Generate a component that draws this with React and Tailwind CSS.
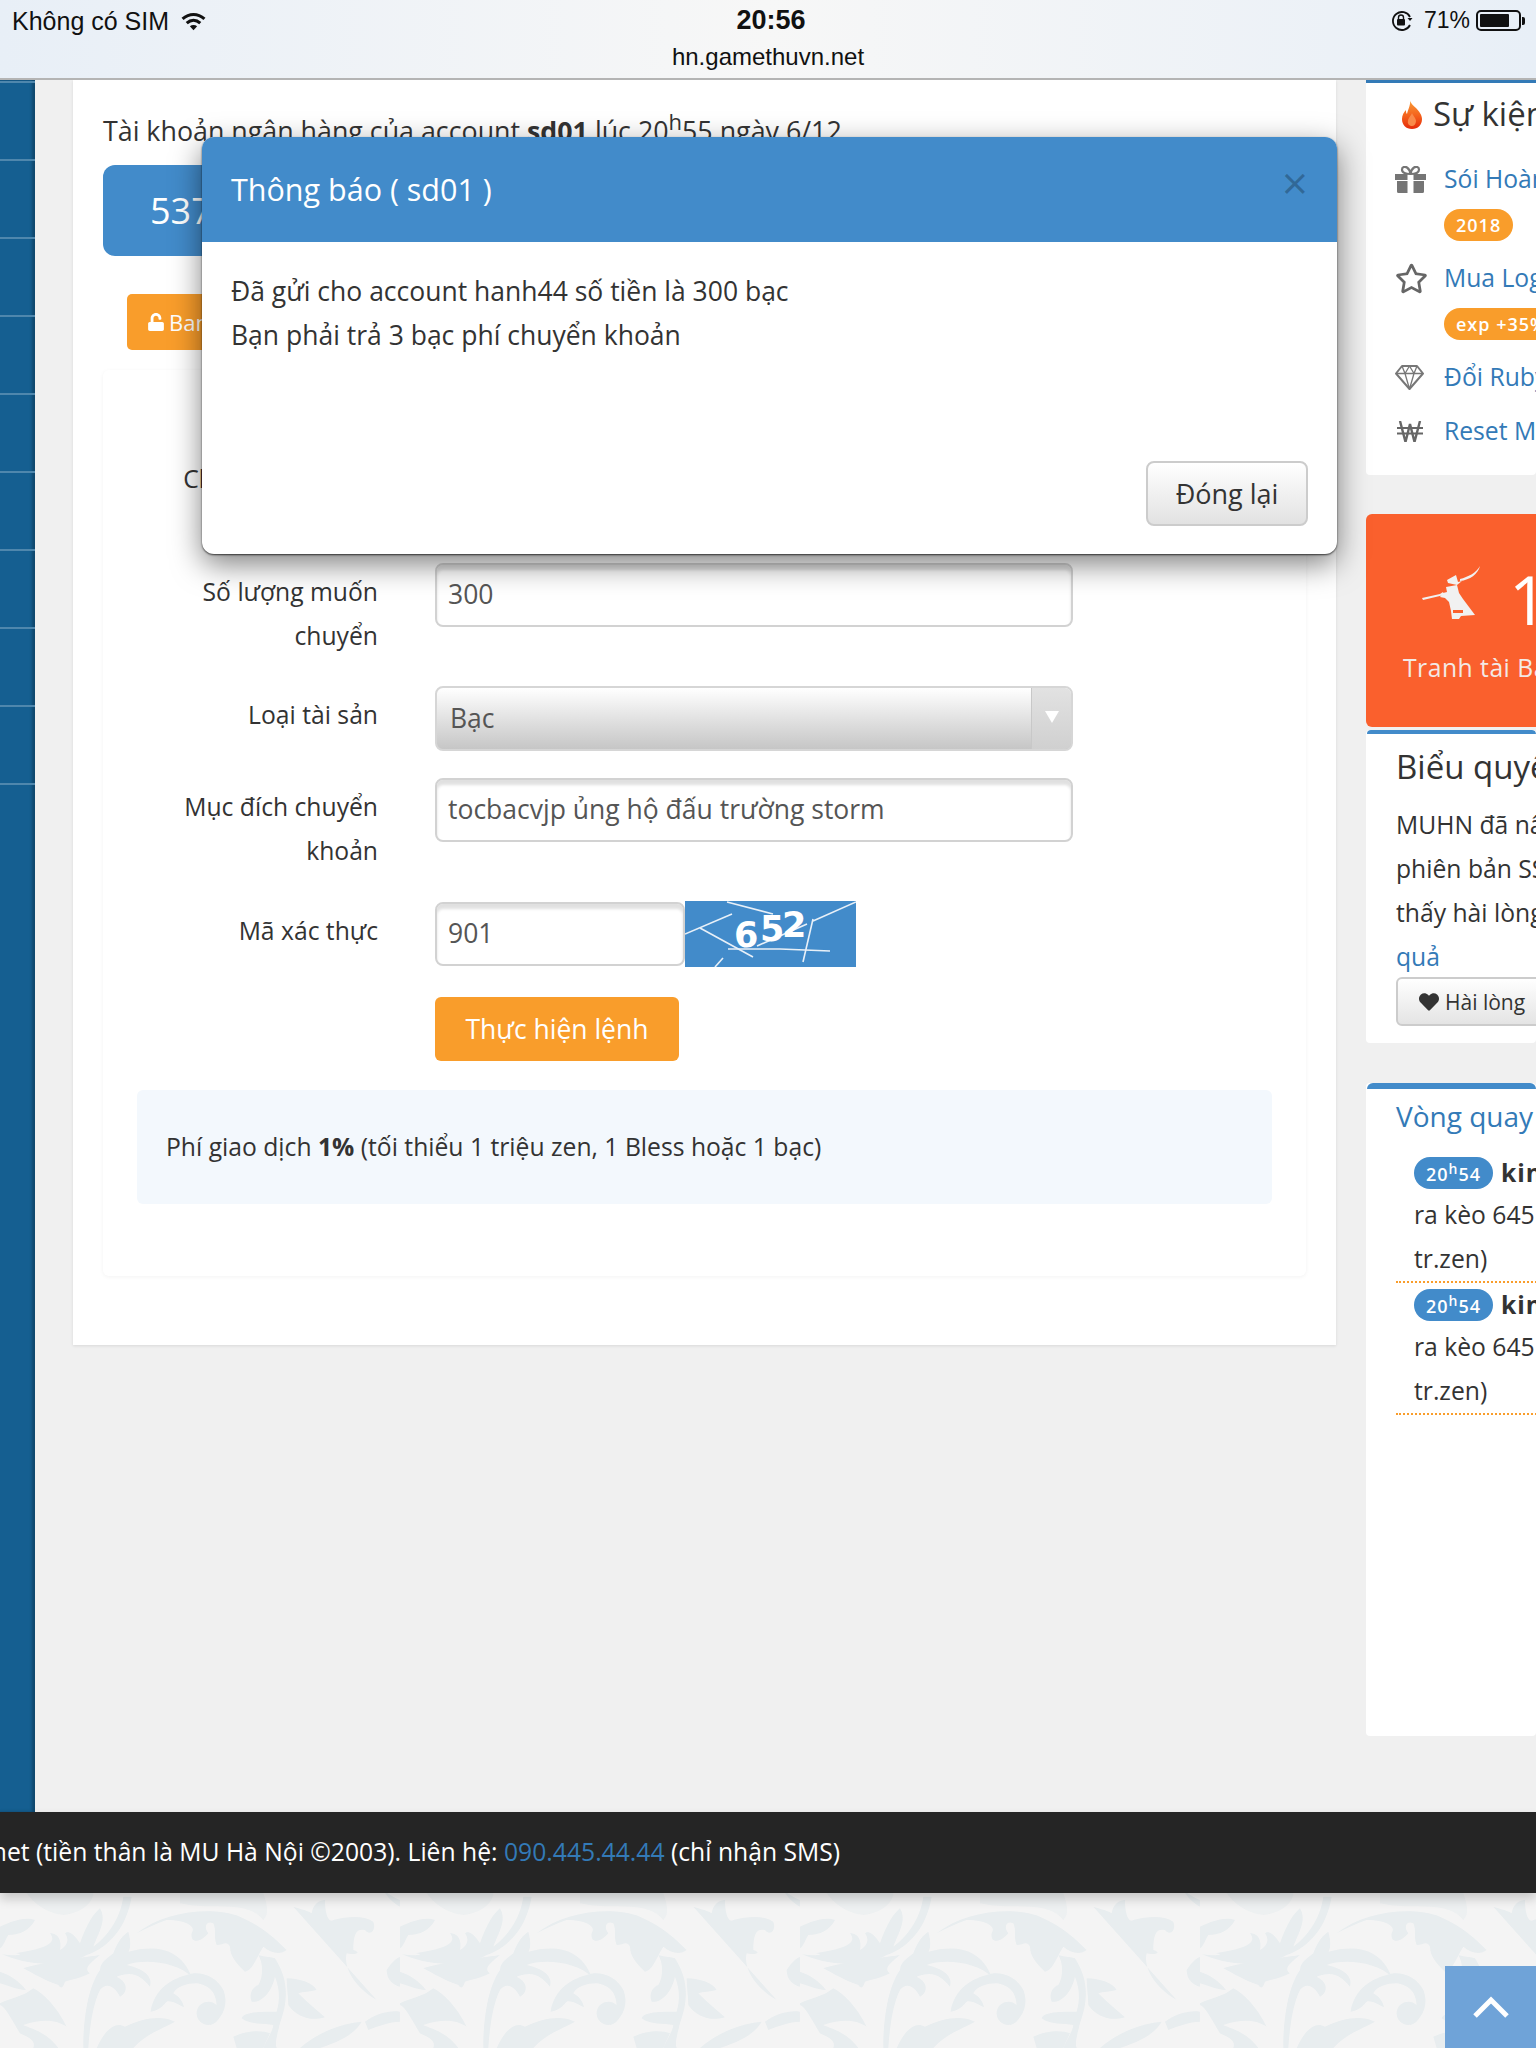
import { FaUnlock, FaRegStar, FaHeart } from 'react-icons/fa';

// Left nav rail, only the blue strip is on screen
function SideRail() {
  return (
    <div className="w-[35px] shrink-0 bg-[#155f91] shadow-[inset_-3px_0_3px_rgba(0,0,0,0.25)] flex flex-col">
      <div className="h-[3px] border-b-2 border-[#4f87ad]" />
      {[0, 1, 2, 3, 4, 5, 6, 7, 8].map((i) => (
        <div key={i} className="h-[78px] border-b-2 border-[#4f87ad]" />
      ))}
    </div>
  );
}

function FormRow({ label, children, className = '' }) {
  return (
    <div className={`flex ${className}`}>
      <div className="w-[242px] shrink-0 pt-[7px] text-right text-[#333] text-[24.7px]">{label}</div>
      <div className="ml-[57px]">{children}</div>
    </div>
  );
}

function TextBox({ value, width = 'w-[638px]' }) {
  return (
    <div className={`${width} h-[64px] border-2 border-[#d2d2d2] rounded-[8px] bg-white shadow-[inset_0_5px_3px_rgba(0,0,0,0.12)] px-[11px] pb-[3px] flex items-center text-[#555] text-[26.5px] whitespace-nowrap`}>
      {value}
    </div>
  );
}

function Captcha() {
  return (
    <svg className="w-[171px] h-[66px] -mt-px shrink-0" viewBox="0 0 171 66">
      <rect width="171" height="66" fill="#428bca" />
      <g stroke="#e8f0f8" strokeWidth="1.6" fill="none">
        <path d="M0 33L47 13" />
        <path d="M15 27L68 56" />
        <path d="M42 1L88 13" />
        <path d="M43 48L95 48L145 50" />
        <path d="M128 20L171 1" />
        <path d="M128 18L118 61" />
        <path d="M30 66L38 57" />
        <path d="M72 45L122 23" />
      </g>
      <g fill="#fff" fontFamily="'DejaVu Sans', sans-serif" fontWeight="700" fontSize="35">
        <text x="49" y="46">6</text>
        <text x="75" y="40">5</text>
        <text x="97" y="36">2</text>
      </g>
    </svg>
  );
}

function Flame() {
  return (
    <svg className="w-[20px] h-[30px] shrink-0" viewBox="0 0 20 30">
      <defs>
        <linearGradient id="flameFill" x1="0" y1="0" x2="0" y2="1">
          <stop offset="0" stopColor="#f9a23a" />
          <stop offset="0.55" stopColor="#f4621c" />
          <stop offset="1" stopColor="#e52b0a" />
        </linearGradient>
      </defs>
      <path d="M8 0c0 4 3 6 6 9 3 3 6 7 6 11 0 6-4 10-10 10S0 26 0 20c0-4 2-7 4-9 0 2 0 3 1 4 1-5 4-9 3-15z" fill="url(#flameFill)" />
      <path d="M10 14c1 3 4 5 4 8 0 3-2 5-4 5s-5-2-4-5c0-3 3-5 4-8z" fill="#f98a4a" />
    </svg>
  );
}

function GiftIcon() {
  return (
    <svg className="w-[31px] h-[27px] shrink-0" viewBox="0 0 31 27" fill="#757575">
      <path d="M15.500 8C11 8 7 7 7 3.500 7 1 10 0 12 1.500c1.500 1 3 3.500 3.500 6.500zM15.500 8C20 8 24 7 24 3.500 24 1 21 0 19 1.500c-1.500 1-3 3.500-3.500 6.500z" fill="none" stroke="#757575" strokeWidth="2.200" />
      <path d="M0 8h12.500v6H0zM18.500 8H31v6H18.500zM2 15h10.500v12H3.500A1.500 1.500 0 0 1 2 25.500zM18.500 15H29v10.500a1.500 1.500 0 0 1-1.500 1.500h-9z" />
    </svg>
  );
}

function GemIcon() {
  return (
    <svg className="w-[29px] h-[25px] shrink-0" viewBox="0 0 29 25" fill="none" stroke="#777" strokeWidth="2" strokeLinejoin="round">
      <path d="M7 1h15l6 7.500L14.500 24 1 8.500z" />
      <path d="M1 8.500h27M10 8.500L14.500 24 19 8.500M7 1l3 7.500L14.500 1 19 8.500 22 1" strokeWidth="1.300" />
    </svg>
  );
}

function WonIcon() {
  return (
    <svg className="w-[26px] h-[21px] shrink-0 ml-[2px]" viewBox="0 0 26 21" fill="none" stroke="#666" strokeWidth="2.400">
      <path d="M3 0l5.500 21L13 3l4.500 18L23 0" />
      <path d="M0 7h26M0 12.500h26" strokeWidth="2" />
    </svg>
  );
}

function Warrior() {
  return (
    <svg className="w-[60px] h-[54px] shrink-0" viewBox="0 0 60 54" fill="#f1f1f1">
      <path d="M0 32l18-4 3-2 1 3-21 5z" />
      <path d="M25 14l9-5 2 7 4-1-5 4-9-2z" />
      <path d="M38 13C46 11 54 7 58 0 56 8 48 14 38 15z" />
      <path d="M24 21l11-2 2 8 4 6 12 16-14 1-2 3H30l-1-8-2-9-4-4-5-1 3-4 4-1z" />
      <rect x="31" y="44" width="10" height="3" fill="#fa602d" />
    </svg>
  );
}

function EventRow({ icon, text, badge }) {
  return (
    <div className="flex">
      <div className="w-[48px] shrink-0 -ml-px mr-px h-[44px] flex items-center">{icon}</div>
      <div>
        <div className="text-[#337ab7] leading-[44px] whitespace-nowrap">{text}</div>
        {badge && (
          <div className="w-fit mt-[8px] mb-[15px] h-[32px] rounded-full bg-[#f99d2b] text-white text-[18px] font-semibold tracking-[1px] px-[12px] leading-[32px] whitespace-nowrap">
            {badge}
          </div>
        )}
      </div>
    </div>
  );
}

function SpinRow() {
  return (
    <div className="border-b-2 border-dotted border-[#f99d2b] pl-[18px] mb-[6px]">
      <div className="flex items-center h-[32px] gap-[8px] whitespace-nowrap">
        <span className="h-[32px] w-[79px] rounded-full bg-[#428bca] text-white text-[18px] font-semibold tracking-[1px] leading-[34px] text-center">
          20<sup className="text-[14px] leading-none">h</sup>54
        </span>
        <b className="text-[#333] tracking-[1px]">kingdom</b>
      </div>
      <div className="leading-[44px] mt-[4px] whitespace-nowrap">ra kèo 645 tr.zen cho</div>
      <div className="leading-[44px]">tr.zen)</div>
    </div>
  );
}

function RightColumn() {
  return (
    <div className="ml-[30px] w-[170px] shrink-0 overflow-hidden text-[24.7px] text-[#333]">
      <div className="h-[395px] bg-white border-t-[3px] border-[#337ab7] rounded-b-[4px] pl-[30px]">
        <div className="flex items-center h-[61px] pl-[6px] whitespace-nowrap">
          <Flame />
          <span className="ml-[11px] text-[33px] text-[#333]">Sự kiện</span>
        </div>
        <div className="pt-[13px]">
          <EventRow icon={<GiftIcon />} text="Sói Hoàng Kim" badge="2018" />
          <EventRow icon={<FaRegStar className="text-[33px] text-[#666]" />} text="Mua Logo" badge="exp +35%" />
          <EventRow icon={<GemIcon />} text="Đổi Ruby" />
          <div className="h-[10px]" />
          <EventRow icon={<WonIcon />} text="Reset Master" />
        </div>
      </div>

      <div className="mt-[39px] h-[213px] bg-[#fa602d] rounded-l-[6px] pl-[37px] text-[#f3e9e5]">
        <div className="flex items-start pt-[52px] pl-[19px] h-[122px]">
          <Warrior />
          <span className="ml-[27px] -mt-[12px] text-[67px] leading-[90px] text-white">1</span>
        </div>
        <div className="mt-[10px] whitespace-nowrap tracking-[0.5px]">Tranh tài Bang hội</div>
      </div>

      <div className="mt-[3px] h-[313px] bg-white rounded-[4px] pl-[30px] relative overflow-hidden">
        <div className="absolute left-[1px] right-0 top-0 h-[4px] rounded-t-[6px] bg-[#428bca]" />
        <div className="pt-[12px] text-[33px] leading-[50px] whitespace-nowrap">Biểu quyết</div>
        <div className="leading-[44px] mt-[11px] whitespace-nowrap">MUHN đã nâng cấp lên</div>
        <div className="leading-[44px] whitespace-nowrap">phiên bản SS6, bạn có</div>
        <div className="leading-[44px] whitespace-nowrap">thấy hài lòng? Xem kết</div>
        <div className="leading-[44px] text-[#337ab7]">quả</div>
        <div className="w-[300px] h-[49px] -mt-[2px] border-2 border-[#ccc] rounded-[6px] bg-linear-to-b from-white to-[#e4e4e4] flex items-center gap-[6px] pl-[21px] text-[21px] text-[#333]">
          <FaHeart className="text-[20px]" />
          <span>Hài lòng</span>
        </div>
      </div>

      <div className="mt-[40px] h-[653px] bg-white rounded-[4px] pl-[30px] relative overflow-hidden">
        <div className="absolute left-[1px] right-0 top-0 h-[6px] rounded-t-[6px] bg-[#428bca]" />
        <div className="pt-[13px] text-[28px] leading-[40px] text-[#337ab7] whitespace-nowrap">Vòng quay may mắn</div>
        <div className="mt-[21px] w-[300px]">
          <SpinRow />
          <SpinRow />
        </div>
      </div>
    </div>
  );
}

function TransferForm() {
  return (
    <div className="mt-[20px] w-[1203px] h-[906px] rounded-[6px] bg-white shadow-[0_1px_4px_rgba(0,0,0,0.05)] pt-[80px] pl-[33px]">
      <FormRow label="Chuyển tiền đến:" className="h-[113px]">
        <TextBox value="hanh44" />
      </FormRow>
      <FormRow label="Số lượng muốn chuyển" className="mb-[28px]">
        <TextBox value="300" />
      </FormRow>
      <FormRow label="Loại tài sản" className="mb-[27px]">
        <div className="w-[638px] h-[65px] rounded-[8px] border-2 border-[#d6d6d6] bg-linear-to-b from-white to-[#c6c6c6] flex items-center text-[#555] text-[26.5px] overflow-hidden">
          <span className="pl-[13px] pb-[2px] flex-1">Bạc</span>
          <div className="w-[40px] h-full border-l border-[#c8c8c8] bg-linear-to-b from-[#e2e2e2] to-[#d0d0d0] flex items-center justify-center">
            <div className="w-0 h-0 -mt-[4px] border-x-[7px] border-x-transparent border-t-[12px] border-t-white" />
          </div>
        </div>
      </FormRow>
      <FormRow label="Mục đích chuyển khoản" className="mb-[29px]">
        <TextBox value="tocbacvjp ủng hộ đấu trường storm" />
      </FormRow>
      <FormRow label="Mã xác thực" className="mb-[30px]">
        <div className="flex">
          <TextBox value="901" width="w-[250px]" />
          <Captcha />
        </div>
      </FormRow>
      <div className="ml-[299px] w-[244px] h-[64px] rounded-[6px] bg-[#f99d2b] text-white text-[26.5px] flex items-center justify-center">
        Thực hiện lệnh
      </div>
      <div className="mt-[29px] ml-px w-[1135px] h-[114px] rounded-[6px] bg-[#f3f8fd] pl-[29px] flex items-center text-[#333] text-[24.7px]">
        <span>Phí giao dịch <b>1%</b> (tối thiểu 1 triệu zen, 1 Bless hoặc 1 bạc)</span>
      </div>
    </div>
  );
}

function NoticeModal() {
  return (
    <div className="absolute left-[202px] top-[137px] w-[1135px] h-[417px] rounded-[12px] bg-white overflow-hidden shadow-[0_10px_30px_rgba(0,0,0,0.5),0_1px_2px_rgba(0,0,0,0.7)] flex flex-col text-[#333] text-[26.5px]">
      <div className="h-[105px] shrink-0 bg-[#428bca] pl-[29px] flex items-center justify-between text-white">
        <span className="text-[30.500px] pb-[2px]">Thông báo ( sd01 )</span>
        <span className="mr-[29px] -mt-[16px] text-[46px] leading-none text-black/25">×</span>
      </div>
      <div className="flex-1 pl-[29px] pt-[27px]">
        <p>Đã gửi cho account hanh44 số tiền là 300 bạc</p>
        <p>Bạn phải trả 3 bạc phí chuyển khoản</p>
      </div>
      <div className="flex justify-end pr-[29px] pb-[28px]">
        <div className="w-[162px] h-[65px] rounded-[8px] border-2 border-[#ccc] bg-linear-to-b from-white to-[#e2e2e2] flex items-center justify-center text-[27px]">
          Đóng lại
        </div>
      </div>
    </div>
  );
}

function FloralPattern() {
  return (
    <svg className="absolute inset-0 w-full h-full" xmlns="http://www.w3.org/2000/svg">
      <defs>
        <pattern id="floral" width="400" height="155" patternUnits="userSpaceOnUse">
          <g transform="scale(0.3333) translate(0 -9)" fill="#e8edef">
            <path d="M410 130C500 60 640 50 720 80 790 110 830 150 860 180 840 195 815 190 790 170 770 200 760 240 735 245 710 220 690 200 690 170 680 150 670 165 650 165 640 140 650 120 640 100 620 90 610 110 625 130 600 160 570 160 575 130 590 110 560 90 500 90 470 100 440 115 410 130z" />
            <path d="M250 474C250 380 265 290 300 240 300 215 330 200 340 190 345 175 360 140 385 125 395 160 390 180 385 185 460 165 540 170 575 260 530 215 430 205 380 225 430 235 460 260 450 290 425 260 400 240 350 260 390 280 380 310 360 320 345 290 320 275 300 300 280 340 270 400 265 474z" />
            <circle cx="625" cy="370" r="35" />
            <path d="M452 365C460 310 500 270 560 255 600 240 650 260 670 300 690 350 660 395 630 405L650 350C650 300 620 285 590 280 560 280 530 290 520 310 540 320 550 340 552 352 530 340 510 330 500 335 490 345 480 360 452 365z" />
            <path d="M0 190C60 220 180 240 260 195 330 170 380 110 395 20L370 20C360 90 320 140 280 170 300 120 320 90 300 55 270 80 250 130 240 160 215 120 200 125 195 130 210 150 200 170 180 180 185 160 180 130 150 130 170 155 150 175 45 190 90 195 20 200 0 190z" />
            <path d="M70 235C130 215 230 205 300 195 270 220 250 235 270 250 240 265 210 270 195 275 190 290 185 300 175 285 130 270 100 250 70 235z" />
            <path d="M0 110C40 90 80 80 105 90 90 120 60 135 25 135 15 150 10 170 0 175z" />
            <path d="M0 245C30 255 60 275 78 300 50 300 20 285 0 280z" />
            <path d="M0 340C30 325 70 320 100 295 130 310 170 350 200 410 170 390 130 385 70 405 90 415 140 425 175 474H100C110 450 80 440 60 430 30 380 15 350 0 345z" />
            <path d="M290 474C310 430 340 390 375 410 430 385 480 375 525 395 480 420 440 430 400 474z" />
            <path d="M825 205C860 260 870 320 840 400 830 440 825 460 830 474H790C800 450 820 420 820 405 790 400 750 405 725 385 730 365 780 365 830 365 840 330 840 300 825 260 815 310 780 340 755 335 745 310 760 290 775 285 790 260 790 220 775 195 790 200 810 200 825 205z" />
            <path d="M860 265C900 265 940 280 950 300 930 305 910 305 895 310 925 340 950 360 975 382 930 395 890 380 865 345 865 320 860 290 860 265z" />
            <path d="M880 50C910 60 920 60 935 70 940 40 960 30 975 30 975 70 985 100 1000 90 1040 80 1090 75 1120 95 1130 120 1110 140 1095 120 1070 115 1060 130 1060 180 1090 190 1060 195 1040 190 1030 230 1060 290 1130 330 1200 340V362C1120 350 1040 310 1020 250 1015 225 1010 205 1000 185 995 230 990 250 985 265 960 220 950 170 950 130 945 160 945 180 930 195 920 130 900 90 880 50z" />
            <path d="M1150 0C1170 15 1185 25 1200 30V50C1180 40 1160 20 1150 0z" />
            <path d="M1160 240C1175 215 1190 205 1200 200V290C1180 285 1160 270 1160 240z" />
            <path d="M900 474C950 430 1020 400 1085 395 1060 440 1000 460 960 474z" />
            <path d="M700 440C740 420 790 420 810 430L790 474H710z" />
            <path d="M1095 395C1130 370 1170 360 1200 365V395C1170 395 1130 410 1105 420z" />
            <path d="M540 9H790C800 40 810 70 790 90 770 60 720 50 690 50 640 50 580 50 540 40z" opacity="0.6" />
            <path d="M80 9H280C280 40 240 70 190 75 140 70 100 40 80 9z" opacity="0.6" />
          </g>
        </pattern>
      </defs>
      <rect width="100%" height="100%" fill="url(#floral)" />
    </svg>
  );
}

export default function App() {
  return (
    <div className="relative w-[1536px] h-[2048px] overflow-hidden bg-[#f0f0f0] flex flex-col font-['Open_Sans',sans-serif] text-[26px] leading-[44px]">
      {/* iOS status bar */}
      <div className="relative z-10 h-[80px] shrink-0 border-b-2 border-[#b4b4b4] bg-linear-to-r from-[#e8eff7] via-[#f7f7f7] to-[#e8eff7] font-['Liberation_Sans',sans-serif] text-[#111] text-[24px] leading-none">
        <div className="absolute left-[12px] top-[9px] flex items-center gap-[12px]">
          <span className="text-[25px]">Không có SIM</span>
          <svg className="w-[25px] h-[19px]" viewBox="0 0 24 18" fill="none" stroke="#111" strokeWidth="3">
            <path d="M1.5 6.5C8 .8 16 .8 22.500 6.500" />
            <path d="M5.500 10.500c4-3.500 9-3.500 13 0" />
            <path d="M12 17.500L8.500 13.500c2-1.500 5-1.500 7 0z" fill="#111" stroke="none" />
          </svg>
        </div>
        <div className="flex flex-col items-center pt-[7px] gap-[11px]">
          <b className="text-[27px] ml-[6px]">20:56</b>
          <span>hn.gamethuvn.net</span>
        </div>
        <div className="absolute right-[11px] top-[9px] flex items-center">
          <svg className="w-[24px] h-[22px]" viewBox="0 0 24 22" fill="none" stroke="#111" strokeWidth="1.800">
            <path d="M20 15a9 9 0 1 1 0-8" />
            <path d="M22.500 8l-2.500 3-2.500-3" fill="#111" stroke="none" />
            <rect x="7" y="9" width="8" height="6.500" rx="1" fill="#111" stroke="none" />
            <path d="M8.500 9V7.500a2.500 2.500 0 0 1 5 0V9" strokeWidth="1.400" />
          </svg>
          <span className="ml-[10px] text-[23px]">71%</span>
          <div className="ml-[6px] w-[45px] h-[21px] border-2 border-[#111] rounded-[5px] p-[2px]">
            <div className="w-[29px] h-full bg-[#111] rounded-[1px]" />
          </div>
          <div className="ml-[1px] w-[3px] h-[8px] bg-[#111] rounded-r-[2px]" />
        </div>
      </div>

      <div className="h-[1732px] shrink-0 flex">
        <SideRail />
        <div className="ml-[38px] w-[1263px] h-[1265px] shrink-0 bg-white shadow-[0_1px_3px_rgba(0,0,0,0.1)] pl-[30px]">
          <div className="pt-[29px] text-[#333] text-[26.8px] whitespace-nowrap">
            Tài khoản ngân hàng của account <b>sd01</b> lúc 20<sup className="text-[22px] leading-none">h</sup>55 ngày 6/12
          </div>
          <div className="mt-[12px] w-[600px] h-[91px] rounded-l-[12px] bg-[#428bca] pl-[47px] flex items-center text-[36px] text-white">
            537
          </div>
          <div className="mt-[38px] ml-[24px] w-[300px] h-[56px] rounded-[5px] bg-[#f99d2b] pl-[20px] flex items-center gap-[4px] text-[22px] text-white">
            <FaUnlock className="text-[18px]" />
            <span>Bank</span>
          </div>
          <TransferForm />
        </div>
        <RightColumn />
      </div>

      {/* Footer */}
      <div className="relative z-10 h-[81px] shrink-0 bg-[#252525] shadow-[0_6px_10px_rgba(0,0,0,0.18)] flex items-center justify-end w-[1536px] pr-[696px] pb-[2px] text-white text-[24.7px] whitespace-nowrap">
        <span>MU Hà Nội gamethuvn.net (tiền thân là MU Hà Nội ©2003). Liên hệ: <span className="text-[#337ab7]">090.445.44.44</span> (chỉ nhận SMS)</span>
      </div>

      <div className="relative flex-1 bg-[#f4f4f4]">
        <FloralPattern />
        <div className="absolute right-0 bottom-0 w-[91px] h-[82px] bg-[#6fa3d8] flex items-center justify-center">
          <svg className="w-[38px] h-[24px]" viewBox="0 0 38 24" fill="none" stroke="#fff" strokeWidth="5">
            <path d="M3 21L19 5l16 16" />
          </svg>
        </div>
      </div>

      <NoticeModal />
    </div>
  );
}
